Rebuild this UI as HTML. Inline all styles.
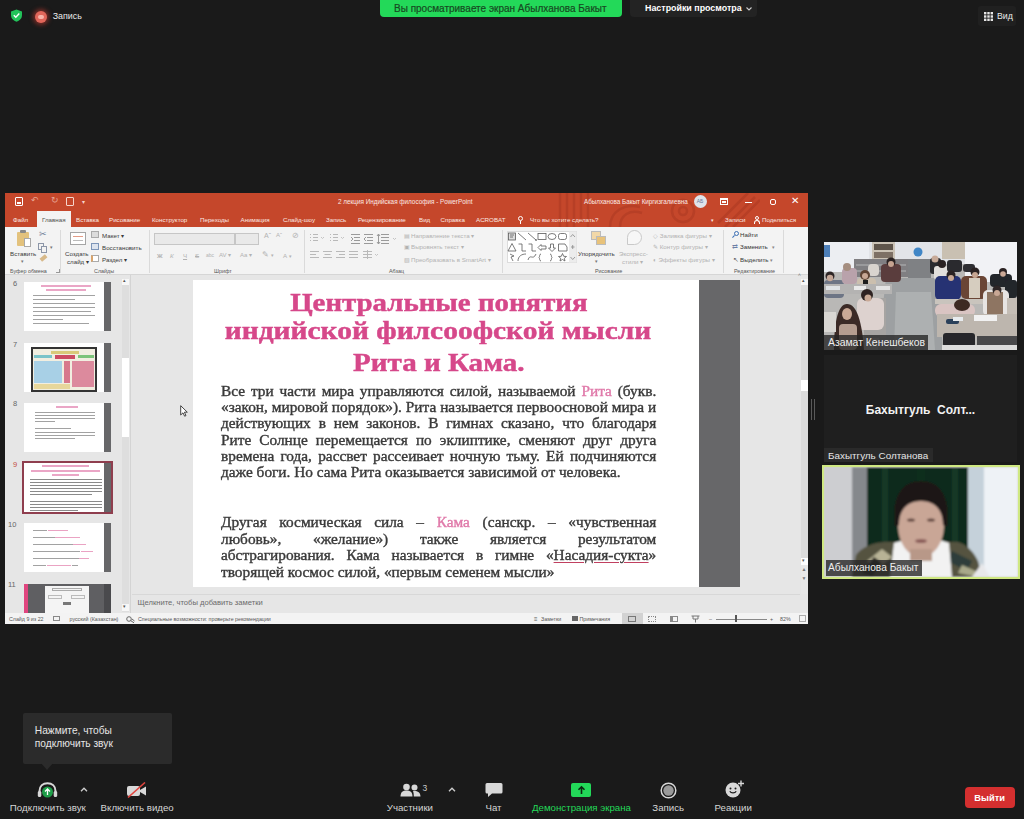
<!DOCTYPE html>
<html><head><meta charset="utf-8">
<style>
*{margin:0;padding:0;box-sizing:border-box}
html,body{width:1024px;height:819px;overflow:hidden;background:#1a1a1a;font-family:"Liberation Sans",sans-serif}
.a{position:absolute;white-space:nowrap}
#ppt{position:absolute;left:5px;top:193px;width:803px;height:431px;background:#e6e6e6;overflow:hidden}
#ttl{position:absolute;left:0;top:0;width:803px;height:34px;background:#c5472b}
#rib{position:absolute;left:0;top:34px;width:803px;height:48px;background:#f3f3f3;border-bottom:1px solid #d6d6d6}
.tab{position:absolute;top:22px;font-size:6.2px;color:#fbe9e4;line-height:10px;white-space:nowrap}
.rl{position:absolute;font-size:6.2px;color:#3a3a3a;line-height:9px;white-space:nowrap}
.gl{position:absolute;top:74px;font-size:5.4px;color:#555;line-height:8px;white-space:nowrap}
.sep{position:absolute;top:37px;width:1px;height:43px;background:#dadada}
.dis{color:#b2b2b2}
#slide{position:absolute;left:188px;top:87px;width:506px;height:307px;background:#fff}
#strip{position:absolute;left:694px;top:87px;width:41px;height:307px;background:#676769}
.tt{position:absolute;font-family:"Liberation Serif",serif;font-weight:bold;color:#d6488a;white-space:nowrap;font-size:25px;line-height:30px;-webkit-text-stroke:0.45px #d6488a}
.bt{position:absolute;font-family:"Liberation Serif",serif;color:#333;white-space:nowrap;font-size:14px;line-height:16px}
#status{position:absolute;left:0;top:420px;width:803px;height:11px;background:#f3f3f3}
.st{position:absolute;top:422px;font-size:5.3px;color:#555;line-height:9px;white-space:nowrap}
.tl{position:absolute;left:9px;height:1px;background:#a2a2a2}
.tp{position:absolute;height:1.2px;background:#eaa3c3}
.tl2{position:absolute;left:6px;width:72px;height:1.1px;background:#8a8a8a}
.thumb{position:absolute;left:19px;width:87px;height:49px;background:#fff}
.thumb .ds{position:absolute;right:0;top:0;width:7px;height:100%;background:#676769}
.tn{position:absolute;left:8px;font-size:7.5px;color:#666;line-height:9px}
.bj,.bl{font-family:"Liberation Serif",serif;color:#3a3a3a;-webkit-text-stroke:0.38px #3a3a3a;font-size:14.2px;line-height:16.2px;height:16.2px;white-space:nowrap;overflow:visible}
.bj{text-align:justify;text-align-last:justify;white-space:normal}
#body2 .bj,#body2 .bl{line-height:16.6px;height:16.6px}
.pk{color:#e07aaa;-webkit-text-stroke-color:#e07aaa}
u{text-decoration:underline;text-decoration-color:#c04060;text-underline-offset:2px}
.bl2{top:802px;font-size:9.7px;color:#d6d6d6;line-height:12px}
.zt{position:absolute;color:#e6e6e6;font-size:10px;white-space:nowrap}
</style></head><body>

<!-- Zoom top bar -->
<div class="a" style="left:380px;top:0;width:242px;height:17px;background:#23d959;border-radius:0 0 4px 4px"></div>
<div class="a" style="left:394px;top:3px;font-size:10px;color:#174a22;line-height:11px;-webkit-text-stroke:0.2px #174a22">Вы просматриваете экран Абылханова Бакыт</div>
<div class="a" style="left:630px;top:0;width:127px;height:17px;background:#232323;border-radius:0 0 4px 4px"></div>
<div class="a" style="left:645px;top:3px;font-size:8.9px;color:#fff;font-weight:bold;line-height:11px">Настройки просмотра</div>

<!-- PowerPoint window -->
<div id="ppt">
  <div id="ttl"></div>
  <svg style="position:absolute;left:545px;top:0" width="210" height="34" viewBox="0 0 210 34" fill="none" stroke="rgba(110,25,10,0.16)" stroke-width="2.5">
    <path d="M10 0 V34 M17 0 V34 M24 0 V34 M31 0 V30 M38 0 V34"/>
    <path d="M60 34 C60 18 75 10 90 14 M70 34 C70 22 80 16 92 20"/>
    <circle cx="133" cy="18" r="11"/><circle cx="133" cy="18" r="4"/>
    <path d="M175 34 L205 4 M183 34 L210 7 M168 30 L198 0"/>
  </svg>
  <!-- quick access -->
  <div style="position:absolute;left:10px;top:4px;width:8px;height:9px;border:1.5px solid #fff;border-radius:1px"></div>
  <div style="position:absolute;left:12px;top:9px;width:4px;height:2px;background:#fff"></div>
  <div class="a" style="left:26px;top:2px;font-size:9px;color:#e8a593">&#x21B6;</div>
  <div class="a" style="left:46px;top:2px;font-size:9px;color:#e8a593">&#x21BB;</div>
  <div style="position:absolute;left:61px;top:4px;width:8px;height:9px;border:1px solid #f6d5cb;border-radius:1px"></div>
  <div class="a" style="left:77px;top:5px;font-size:6px;color:#f6d5cb">&#9662;</div>
  <div class="a" style="left:333px;top:4px;font-size:6.35px;color:#fbe9e4;line-height:9px">2 лекция Индийская философия - PowerPoint</div>
  <div class="a" style="left:579px;top:4px;font-size:6.3px;color:#fbe9e4;line-height:9px">Абылханова Бакыт Киргизгалиевна</div>
  <div style="position:absolute;left:688.5px;top:2px;width:13px;height:13px;border-radius:50%;background:#dfe3ea;font-size:5px;line-height:13px;text-align:center;color:#6a7a9a">АБ</div>
  <div style="position:absolute;left:715px;top:5px;width:8px;height:7px;border:1px solid #fff;border-top-width:2px"></div><div style="position:absolute;left:717px;top:8px;width:4px;height:2px;background:#fff"></div>
  <div style="position:absolute;left:740px;top:9px;width:7px;height:1px;background:#fff"></div>
  <div style="position:absolute;left:765px;top:5.5px;width:6px;height:6px;border:1.2px solid #fff;border-radius:2px"></div>
  <div class="a" style="left:786px;top:2px;font-size:10px;color:#fff;line-height:12px">&#x2715;</div>
  <!-- tabs -->
  <div style="position:absolute;left:32px;top:18px;width:34px;height:17px;background:#f3f3f3"></div>
  <div class="tab" style="left:8px">Файл</div>
  <div class="tab" style="left:37px;color:#505050">Главная</div>
  <div class="tab" style="left:71px">Вставка</div>
  <div class="tab" style="left:104px">Рисование</div>
  <div class="tab" style="left:147px">Конструктор</div>
  <div class="tab" style="left:195px">Переходы</div>
  <div class="tab" style="left:235.6px">Анимация</div>
  <div class="tab" style="left:278px">Слайд-шоу</div>
  <div class="tab" style="left:321px">Запись</div>
  <div class="tab" style="left:353px">Рецензирование</div>
  <div class="tab" style="left:414px">Вид</div>
  <div class="tab" style="left:435.6px">Справка</div>
  <div class="tab" style="left:471px">ACROBAT</div>
  <div style="position:absolute;left:513px;top:23px;width:5px;height:5px;border:1px solid #fff;border-radius:50%"></div>
  <div style="position:absolute;left:515px;top:28px;width:1px;height:3px;background:#fff"></div>
  <div class="tab" style="left:525px">Что вы хотите сделать?</div>
  <div class="tab" style="left:706px;font-size:5px">&#9662;</div>
  <div class="tab" style="left:720px">Записи</div>
  <div style="position:absolute;left:750px;top:23px;width:4px;height:4px;border:1px solid #fff;border-radius:50%"></div>
  <div style="position:absolute;left:749px;top:27px;width:6px;height:4px;border:1px solid #fff;border-bottom:none;border-radius:3px 3px 0 0"></div>
  <div class="tab" style="left:757px">Поделиться</div>
  <div id="rib"></div>
  <!-- Буфер обмена -->
  <div style="position:absolute;left:12px;top:39px;width:12px;height:14px;background:#e3c27d;border-radius:1px"></div>
  <div style="position:absolute;left:15px;top:37px;width:6px;height:3px;background:#8a8a8a;border-radius:1px"></div>
  <div style="position:absolute;left:19px;top:45px;width:7px;height:9px;background:#fff;border:1px solid #a9a9a9"></div>
  <div class="rl" style="left:5px;top:55.5px">Вставить</div>
  <div class="rl" style="left:16px;top:64px;font-size:5px;color:#777">&#9662;</div>
  <div class="rl" style="left:34px;top:36px;font-size:9px;color:#6e7c96;line-height:10px">&#x2702;</div>
  <div style="position:absolute;left:33px;top:50px;width:6px;height:7px;border:1px solid #8c96a8"></div>
  <div style="position:absolute;left:36px;top:53px;width:6px;height:7px;border:1px solid #8c96a8;background:#f3f3f3"></div>
  <div class="rl" style="left:45px;top:50px;font-size:5px;color:#777">&#9662;</div>
  <div style="position:absolute;left:35px;top:63px;width:7px;height:4px;background:#d7b98a;transform:rotate(-40deg)"></div>
  <div class="gl" style="left:5px">Буфер обмена</div>
  <div style="position:absolute;left:51px;top:76px;width:4px;height:4px;border-right:1px solid #999;border-bottom:1px solid #999"></div>
  <div class="sep" style="left:55px"></div>
  <!-- Слайды -->
  <div style="position:absolute;left:65px;top:39px;width:16px;height:13px;background:#fff;border:1px solid #a5a5a5"></div>
  <div style="position:absolute;left:68px;top:43px;width:10px;height:1px;background:#e39b86"></div>
  <div style="position:absolute;left:68px;top:47px;width:10px;height:1px;background:#bbb"></div>
  <div class="rl" style="left:60px;top:55.5px">Создать</div>
  <div class="rl" style="left:62px;top:63.5px">слайд &#9662;</div>
  <div style="position:absolute;left:86px;top:38px;width:8px;height:7px;background:#dcdcdc;border:1px solid #aaa"></div>
  <div class="rl" style="left:97px;top:37.5px">Макет &#9662;</div>
  <div style="position:absolute;left:86px;top:50px;width:8px;height:7px;background:#dde4ee;border:1px solid #7d95b8"></div>
  <div class="rl" style="left:97px;top:49.5px">Восстановить</div>
  <div style="position:absolute;left:86px;top:62px;width:8px;height:7px;background:#fff;border:1px solid #aaa;border-left:2px solid #d9a46b"></div>
  <div class="rl" style="left:97px;top:61.5px">Раздел &#9662;</div>
  <div class="gl" style="left:89px">Слайды</div>
  <div class="sep" style="left:144px"></div>
  <!-- Шрифт -->
  <div style="position:absolute;left:149px;top:40px;width:81px;height:12px;background:#e9e9e9;border:1px solid #c6c6c6"></div>
  <div style="position:absolute;left:230px;top:40px;width:24px;height:12px;background:#e9e9e9;border:1px solid #c6c6c6"></div>
  <div class="rl dis" style="left:259px;top:38px;font-size:7px">A&#710;</div>
  <div class="rl dis" style="left:271px;top:38px;font-size:6px">A&#711;</div>
  <div class="rl dis" style="left:287px;top:38px;font-size:8px">&#x2298;</div>
  <div class="rl dis" style="left:152px;top:57.5px;font-weight:bold">Ж</div>
  <div class="rl dis" style="left:165px;top:57.5px;font-style:italic">К</div>
  <div class="rl dis" style="left:178px;top:57.5px;text-decoration:underline">Ч</div>
  <div class="rl dis" style="left:190px;top:57.5px;text-decoration:line-through">S</div>
  <div class="rl dis" style="left:201px;top:57.5px;font-size:5px">abc</div>
  <div class="rl dis" style="left:214px;top:57.5px;font-size:6px">AV &#9662;</div>
  <div class="rl dis" style="left:235px;top:57.5px;font-size:6px">Aa &#9662;</div>
  <div class="rl dis" style="left:257px;top:56.5px;font-size:8px">&#x270E; <span style="font-size:5px">&#9662;</span></div>
  <div class="rl dis" style="left:278px;top:57.5px">A <span style="font-size:5px">&#9662;</span></div>
  <div class="gl" style="left:209px">Шрифт</div>
  <div class="sep" style="left:299px"></div>
  <!-- Абзац -->
  <svg style="position:absolute;left:302px;top:40px" width="95" height="28" viewBox="0 0 95 28" fill="none" stroke="#b9b9b9" stroke-width="1">
    <path d="M3 1.5 H4 M6 1.5 H11 M3 4.5 H4 M6 4.5 H11 M3 7.5 H4 M6 7.5 H11"/><path d="M14 4 L15.5 5.5 L17 4" stroke="#c4c4c4"/>
    <path d="M23 1.5 H24 M26 1.5 H31 M23 4.5 H24 M26 4.5 H31 M23 7.5 H24 M26 7.5 H31"/><path d="M34 4 L35.5 5.5 L37 4" stroke="#c4c4c4"/>
    <path d="M44 1.5 H53 M47 4.5 H53 M47 7.5 H53 M44 10.5 H53" stroke="#9a9a9a"/><path d="M44 4 L46 6 L44 8" stroke="#9a9a9a"/>
    <path d="M57 1.5 H66 M60 4.5 H66 M60 7.5 H66 M57 10.5 H66" stroke="#9a9a9a"/><path d="M59 4 L57 6 L59 8" stroke="#9a9a9a"/>
    <path d="M74 1.5 H82 M74 4.5 H82 M74 7.5 H82 M74 10.5 H82" stroke="#9a9a9a"/><path d="M71.5 1 V11 M70 3 L71.5 1 L73 3 M70 9 L71.5 11 L73 9" stroke="#9a9a9a"/><path d="M86 5 L87.5 6.5 L89 5" stroke="#c4c4c4"/>
    <path d="M3 18.5 H12 M3 21.5 H9 M3 24.5 H12"/>
    <path d="M16 18.5 H25 M17.5 21.5 H23.5 M16 24.5 H25"/>
    <path d="M29 18.5 H38 M32 21.5 H38 M29 24.5 H38"/>
    <path d="M42 18.5 H51 M42 21.5 H51 M42 24.5 H51"/>
    <path d="M56 18.5 H65 M56 21.5 H65 M56 24.5 H65 M60.5 17 V26"/><path d="M68 21 L69.5 22.5 L71 21" stroke="#c4c4c4"/>
  </svg>
  <div class="rl dis" style="left:399px;top:37.5px">&#x25A4;</div>
  <div class="rl dis" style="left:406px;top:37.5px">Направление текста &#9662;</div>
  <div class="rl dis" style="left:399px;top:49px">&#x25A3;</div>
  <div class="rl dis" style="left:406px;top:49px">Выровнять текст &#9662;</div>
  <div class="rl dis" style="left:399px;top:61.5px">&#x25A7;</div>
  <div class="rl dis" style="left:406px;top:61.5px">Преобразовать в SmartArt &#9662;</div>
  <div class="gl" style="left:384px">Абзац</div>
  <div class="sep" style="left:497px"></div>
  <!-- Рисование -->
  <div style="position:absolute;left:502px;top:37.5px;width:70px;height:32px;background:#fff;border:1px solid #dcdcdc"></div>
  <svg style="position:absolute;left:502px;top:37.5px" width="70" height="32" viewBox="0 0 70 32" fill="none" stroke="#5a5a5a" stroke-width="0.8">
    <rect x="1.5" y="2" width="7" height="7" fill="#ddd"/><path d="M3 4 H7 M3 6 H6"/>
    <path d="M11 2 L19 9"/><path d="M21 2 L29 9"/><path d="M28 9 L29.5 9.5 L29 8" />
    <rect x="31" y="2.5" width="8" height="6"/>
    <ellipse cx="45" cy="5.5" rx="4" ry="3"/>
    <rect x="51.5" y="2.5" width="8" height="6" rx="2"/>
    <path d="M5 12.5 L9 20 H1 Z"/>
    <path d="M11.5 13 H15 V20 H19"/>
    <path d="M21.5 13 H25 V20 H29"/>
    <path d="M31 16.5 L34 13.5 V15 H39 V18 H34 V19.5 Z"/>
    <path d="M43.5 13 H46.5 V17 H48.5 L45 20.5 L41.5 17 H43.5 Z"/>
    <path d="M51.5 13 H58 L60 16 V20 H51.5 Z"/>
    <path d="M3 23 L7 25 L4 26 L6 30"/>
    <path d="M11 30 C11 25 15 23 19 23"/>
    <path d="M21 29 C23 22 26 30 29 23"/>
    <path d="M34 23 C32 23 33 26 32 26.5 C33 27 32 30 34 30"/>
    <path d="M43 23 C45 23 44 26 45 26.5 C44 27 45 30 43 30"/>
    <path d="M55.5 22.5 L56.7 25.3 L59.5 25.5 L57.3 27.3 L58 30 L55.5 28.5 L53 30 L53.7 27.3 L51.5 25.5 L54.3 25.3 Z"/>
    <rect x="62" y="0.5" width="7.5" height="31" fill="#ececec" stroke="none"/>
    <path d="M63.5 6 L65.7 3.5 L68 6" stroke="#888"/><path d="M64 16 H67.5 M65.7 14 V18" stroke="#888"/><path d="M63.5 26 L65.7 28.5 L68 26" stroke="#888"/>
  </svg>
  <div style="position:absolute;left:586px;top:38px;width:10px;height:9px;background:#f2d8a8;border:1px solid #bbb"></div>
  <div style="position:absolute;left:591px;top:43px;width:10px;height:9px;background:#e8c27a;border:1px solid #bbb"></div>
  <div class="rl" style="left:573px;top:55.5px">Упорядочить</div>
  <div class="rl" style="left:590px;top:63.5px;font-size:5px;color:#777">&#9662;</div>
  <div style="position:absolute;left:622px;top:37px;width:15px;height:15px;border:1px solid #c9c9c9;border-radius:50% 50% 50% 0;background:#f7f7f7"></div>
  <div class="rl dis" style="left:614px;top:55.5px">Экспресс-</div>
  <div class="rl dis" style="left:617px;top:63.5px">стили &#9662;</div>
  <div class="rl dis" style="left:648px;top:37.5px">&#x25C7; Заливка фигуры &#9662;</div>
  <div class="rl dis" style="left:648px;top:49px">&#x270E; Контур фигуры &#9662;</div>
  <div class="rl dis" style="left:648px;top:61.5px">&#x25D0; Эффекты фигуры &#9662;</div>
  <div class="gl" style="left:590px">Рисование</div>
  <div class="sep" style="left:718px"></div>
  <!-- Редактирование -->
  <div style="position:absolute;left:729px;top:38px;width:5px;height:5px;border:1px solid #3b6fb5;border-radius:50%"></div>
  <div style="position:absolute;left:727px;top:43px;width:3px;height:1px;background:#3b6fb5;transform:rotate(-45deg)"></div>
  <div class="rl" style="left:735px;top:37px;color:#333">Найти</div>
  <div class="rl" style="left:727px;top:49px;font-size:7px;color:#6c7fa6">&#x21C4;</div>
  <div class="rl" style="left:735px;top:49px;color:#333">Заменить <span style="font-size:5px;color:#888">&nbsp;&nbsp;&#9662;</span></div>
  <div class="rl" style="left:728px;top:61.5px;font-size:7px;color:#666">&#x2196;</div>
  <div class="rl" style="left:735px;top:61.5px;color:#333">Выделить <span style="font-size:5px;color:#888">&#9662;</span></div>
  <div class="gl" style="left:729px">Редактирование</div>
  <div class="sep" style="left:778px"></div>
  <div class="rl" style="left:793px;top:74px;font-size:7px;color:#666">&#x2038;</div>
  <div id="slide"></div>
  <div id="strip"></div>
  <div class="tt" style="left:0;width:867px;top:95px;text-align:center"><span style="display:inline-block;transform:scaleX(1.154)">Центральные понятия</span></div>
  <div class="tt" style="left:0;width:867px;top:123px;text-align:center"><span style="display:inline-block;transform:scaleX(1.178)">индийской филсоофской мысли</span></div>
  <div class="tt" style="left:0;width:867px;top:155px;text-align:center"><span style="display:inline-block;transform:scaleX(1.162)">Рита и Кама.</span></div>
  <div id="body1" style="position:absolute;left:216px;top:190px;width:403px;transform:scaleX(1.08);transform-origin:0 0">
    <div class="bj">Все три части мира управляются силой, называемой <span class="pk">Рита</span> (букв.</div>
    <div class="bj">«закон, мировой порядок»). Рита называется первоосновой мира и</div>
    <div class="bj">действующих в нем законов. В гимнах сказано, что благодаря</div>
    <div class="bj">Рите Солнце перемещается по эклиптике, сменяют друг друга</div>
    <div class="bj">времена года, рассвет рассеивает ночную тьму. Ей подчиняются</div>
    <div class="bl">даже боги. Но сама Рита оказывается зависимой от человека.</div>
  </div>
  <div id="body2" style="position:absolute;left:216px;top:321px;width:403px;transform:scaleX(1.08);transform-origin:0 0">
    <div class="bj">Другая космическая сила – <span class="pk">Кама</span> (санскр. – «чувственная</div>
    <div class="bj">любовь», «желание») также является результатом</div>
    <div class="bj">абстрагирования. Кама называется в гимне «<u>Насадия-сукта</u>»</div>
    <div class="bl">творящей космос силой, «первым семенем мысли»</div>
  </div>
  <!-- left pane -->
  <div style="position:absolute;left:125px;top:82px;width:1px;height:338px;background:#d4d4d4"></div>
  <div style="position:absolute;left:117px;top:86px;width:7px;height:333px;background:#dedede"></div>
  <div style="position:absolute;left:117px;top:86px;width:7px;height:6px;background:#f7f7f7"></div>
  <div class="a" style="left:118px;top:84px;font-size:5px;color:#555">&#9652;</div>
  <div style="position:absolute;left:117px;top:165px;width:7px;height:79px;background:#fff"></div>
  <div style="position:absolute;left:117px;top:411px;width:7px;height:7px;background:#f7f7f7"></div>
  <div class="a" style="left:118px;top:410px;font-size:5px;color:#555">&#9662;</div>
  <div class="tn" style="top:86px">6</div>
  <div class="tn" style="top:146.6px">7</div>
  <div class="tn" style="top:206px">8</div>
  <div class="tn" style="top:267px;color:#c44a3c">9</div>
  <div class="tn" style="top:327px;left:3px">10</div>
  <div class="tn" style="top:387px;left:3px">11</div>
  <!-- thumb 6 -->
  <div class="thumb" style="top:89.4px">
    <div style="position:absolute;left:17px;top:3px;width:50px;height:1.8px;background:#eaa6c6"></div>
    <div style="position:absolute;left:22px;top:7px;width:40px;height:1.8px;background:#eaa6c6"></div>
    <div class="tl" style="top:13px;width:62px"></div><div class="tl" style="top:17px;width:42px"></div>
    <div class="tl" style="top:21px;width:62px"></div><div class="tl" style="top:25px;width:62px"></div>
    <div class="tl" style="top:29px;width:58px"></div><div class="tl" style="top:33px;width:62px"></div>
    <div class="tl" style="top:37px;width:30px"></div><div class="tl" style="top:41px;width:56px"></div>
    <div class="ds"></div></div>
  <!-- thumb 7 -->
  <div class="thumb" style="top:149.7px">
    <div style="position:absolute;left:7px;top:4px;width:66px;height:45px;border:2px solid #333;background:#f1eee0"></div>
    <div style="position:absolute;left:27px;top:8px;width:28px;height:3px;background:#d9c97a"></div>
    <div style="position:absolute;left:10px;top:12px;width:18px;height:3px;background:#7bc4c9"></div>
    <div style="position:absolute;left:31px;top:12px;width:20px;height:4px;background:#cc4b63"></div>
    <div style="position:absolute;left:54px;top:12px;width:16px;height:3px;background:#7cc47a"></div>
    <div style="position:absolute;left:10px;top:18px;width:28px;height:22px;background:#a8d0e6"></div>
    <div style="position:absolute;left:40px;top:18px;width:6px;height:22px;background:#d7788c"></div>
    <div style="position:absolute;left:48px;top:18px;width:22px;height:26px;background:#dc8a9d"></div>
    <div style="position:absolute;left:10px;top:41px;width:36px;height:5px;background:#e7d79b"></div>
    <div class="ds"></div></div>
  <!-- thumb 8 -->
  <div class="thumb" style="top:209.6px">
    <div style="position:absolute;left:32px;top:3px;width:22px;height:2.2px;background:#eaa6c6"></div>
    <div class="tl" style="left:11px;top:9px;width:60px"></div><div class="tl" style="left:11px;top:12px;width:60px"></div>
    <div class="tl" style="left:11px;top:15px;width:60px"></div><div class="tl" style="left:11px;top:18px;width:20px"></div>
    <div class="tl" style="left:11px;top:25px;width:36px"></div>
    <div class="tl" style="left:11px;top:29px;width:60px"></div><div class="tl" style="left:11px;top:32px;width:60px"></div>
    <div class="tl" style="left:11px;top:35px;width:40px"></div>
    <div class="ds"></div></div>
  <!-- thumb 9 -->
  <div style="position:absolute;left:17px;top:268.3px;width:91px;height:53px;border:2px solid #8f3e4e"></div>
  <div class="thumb" style="top:270px">
    <div style="position:absolute;left:18px;top:2px;width:47px;height:2.2px;background:#eaa6c6"></div>
    <div style="position:absolute;left:7px;top:7px;width:69px;height:2.2px;background:#eaa6c6"></div>
    <div style="position:absolute;left:28px;top:11px;width:27px;height:2.2px;background:#eaa6c6"></div>
    <div class="tl2" style="top:16px"></div><div class="tl2" style="top:19px"></div><div class="tl2" style="top:22px"></div>
    <div class="tl2" style="top:25px"></div><div class="tl2" style="top:28px"></div><div class="tl2" style="top:31px;width:62px"></div>
    <div class="tl2" style="top:38px"></div><div class="tl2" style="top:41px"></div><div class="tl2" style="top:44px"></div><div class="tl2" style="top:47px;width:48px"></div>
    <div class="ds"></div></div>
  <!-- thumb 10 -->
  <div class="thumb" style="top:330px">
    <div class="tl" style="left:9px;top:7px;width:14px"></div><div class="tp" style="left:24px;top:7px;width:20px"></div>
    <div class="tl" style="left:9px;top:14px;width:22px"></div><div class="tp" style="left:31px;top:14px;width:25px"></div>
    <div class="tl" style="left:9px;top:21px;width:40px"></div><div class="tp" style="left:49px;top:21px;width:13px"></div>
    <div class="tl" style="left:9px;top:28px;width:47px"></div><div class="tp" style="left:57px;top:28px;width:12px"></div>
    <div class="tl" style="left:9px;top:35px;width:46px"></div><div class="tp" style="left:55px;top:35px;width:10px"></div>
    <div class="tl" style="left:9px;top:42px;width:13px"></div><div class="tp" style="left:23px;top:42px;width:24px"></div><div class="tl" style="left:48px;top:42px;width:6px"></div>
    <div class="ds"></div></div>
  <!-- thumb 11 -->
  <div class="thumb" style="top:390.8px;background:#5f5f62;height:30px">
    <div style="position:absolute;left:0;top:0;width:4px;height:30px;background:#e0457f"></div>
    <div style="position:absolute;left:21px;top:2px;width:44px;height:28px;background:#f4f4f4"></div>
    <div style="position:absolute;left:28px;top:4px;width:30px;height:3px;border:1px solid #aaa"></div>
    <div style="position:absolute;left:24px;top:11px;width:14px;height:4px;border:1px solid #bbb"></div>
    <div style="position:absolute;left:47px;top:11px;width:14px;height:4px;border:1px solid #bbb"></div>
    <div style="position:absolute;left:39px;top:18px;width:8px;height:3px;background:#777"></div>
    <div class="ds" style="background:#4a4a4d"></div></div>
  <!-- main scrollbar -->
  <div style="position:absolute;left:795.5px;top:86px;width:7px;height:315px;background:#dcdcdc"></div>
  <div style="position:absolute;left:795.5px;top:86px;width:7px;height:6px;background:#f7f7f7"></div>
  <div class="a" style="left:796.5px;top:84px;font-size:5px;color:#555">&#9652;</div>
  <div style="position:absolute;left:795.5px;top:186.5px;width:7px;height:11px;background:#fff"></div>
  <div style="position:absolute;left:795.5px;top:365px;width:7px;height:36px;background:#e8e8e8"></div>
  <div style="position:absolute;left:795.5px;top:365px;width:7px;height:7px;background:#fff"></div>
  <div class="a" style="left:796.5px;top:363.5px;font-size:5px;color:#555">&#9662;</div>
  <div class="a" style="left:796.5px;top:373px;font-size:5px;color:#777">&#9650;</div>
  <div class="a" style="left:796.5px;top:382px;font-size:5px;color:#777">&#9660;</div>
  <!-- notes -->
  <div style="position:absolute;left:127px;top:401px;width:668px;height:1px;background:#d8d8d8"></div>
  <div class="a" style="left:132.4px;top:405px;font-size:7.6px;color:#6a6a6a;line-height:10px">Щелкните, чтобы добавить заметки</div>
  <div id="status"></div>
  <div class="st" style="left:4px">Слайд 9 из 22</div>
  <div style="position:absolute;left:48px;top:423px;width:7px;height:5px;border:1px solid #888"></div>
  <div class="st" style="left:64.5px">русский (Казахстан)</div>
  <svg class="a" style="left:121px;top:423px" width="9" height="7" viewBox="0 0 9 7"><circle cx="3" cy="3" r="2.3" stroke="#666" stroke-width="1" fill="none"/><path d="M4.5 4.5 L8 6.8 M6 3 L8.5 5" stroke="#666" stroke-width="1"/></svg>
  <div class="st" style="left:133px">Специальные возможности: проверьте рекомендации</div>
  <div class="st" style="left:529px;font-size:6px">&#x2261;</div>
  <div class="st" style="left:536px">Заметки</div>
  <div style="position:absolute;left:567px;top:423px;width:6px;height:5px;background:#666"></div>
  <div class="st" style="left:574.5px">Примечания</div>
  <div style="position:absolute;left:617px;top:420px;width:20.5px;height:11px;background:#d2d2d2"></div>
  <div style="position:absolute;left:623px;top:422.5px;width:8px;height:6px;border:1px solid #777"></div>
  <div style="position:absolute;left:643px;top:422.5px;width:8px;height:6px;border:1px dotted #888"></div>
  <div style="position:absolute;left:665px;top:422.5px;width:8px;height:6px;border:1px solid #888;border-left-width:3px"></div>
  <svg class="a" style="left:686px;top:422px" width="9" height="8" viewBox="0 0 9 8"><path d="M0.5 1 H8.5 M2 1 V4 H7 V1 M4.5 4 V7.5" stroke="#777" stroke-width="1" fill="none"/></svg>
  <div class="st" style="left:704px">&#x2013;</div>
  <div style="position:absolute;left:710.5px;top:425.5px;width:51px;height:1px;background:#888"></div>
  <div style="position:absolute;left:730px;top:422px;width:2px;height:7px;background:#555"></div>
  <div class="st" style="left:765px">+</div>
  <div class="st" style="left:775px">82%</div>
  <div style="position:absolute;left:794px;top:422px;width:7px;height:7px;border:1px solid #aaa"></div>
</div>


<!-- top-left -->
<svg class="a" style="left:10px;top:9px" width="13" height="13" viewBox="0 0 13 13"><path d="M6.5 0.5 L12 2.5 V6 C12 9.5 9.5 11.7 6.5 12.7 C3.5 11.7 1 9.5 1 6 V2.5 Z" fill="#22c35a"/><path d="M3.8 6.3 L5.8 8.3 L9.3 4.6" stroke="#fff" stroke-width="1.4" fill="none"/></svg>
<div class="a" style="left:35px;top:11px;width:12px;height:12px;border-radius:50%;background:#e0665a;box-shadow:0 0 4px 2px rgba(200,60,50,.55)"></div>
<div class="a" style="left:38px;top:15px;width:6px;height:4px;border-radius:2px;background:#f7b3a8"></div>
<div class="a" style="left:52.7px;top:11px;font-size:8.9px;color:#e8e8e8;line-height:11px">Запись</div>
<div class="a" style="left:978px;top:6px;width:38px;height:20px;background:#202020;border-radius:3px"></div>
<svg class="a" style="left:984px;top:12px" width="9" height="9" viewBox="0 0 9 9" fill="#e6e6e6"><rect x="0" y="0" width="2.4" height="2.4"/><rect x="3.3" y="0" width="2.4" height="2.4"/><rect x="6.6" y="0" width="2.4" height="2.4"/><rect x="0" y="3.3" width="2.4" height="2.4"/><rect x="3.3" y="3.3" width="2.4" height="2.4"/><rect x="6.6" y="3.3" width="2.4" height="2.4"/><rect x="0" y="6.6" width="2.4" height="2.4"/><rect x="3.3" y="6.6" width="2.4" height="2.4"/><rect x="6.6" y="6.6" width="2.4" height="2.4"/></svg>
<div class="a" style="left:997px;top:10.5px;font-size:8.8px;color:#e8e8e8;line-height:11px">Вид</div>
<svg class="a" style="left:746px;top:7px" width="6" height="4" viewBox="0 0 6 4"><path d="M0.5 0.5 L3 3 L5.5 0.5" stroke="#ccc" stroke-width="1.1" fill="none"/></svg>

<!-- video tile 1: classroom -->
<div class="a" style="left:824px;top:242px;width:193px;height:108px;overflow:hidden"><svg style="position:absolute;left:0;top:0" width="193" height="108" viewBox="0 0 193 108"><defs><filter id="bl1" x="-5%" y="-5%" width="110%" height="110%"><feGaussianBlur stdDeviation="0.7"/></filter></defs><g filter="url(#bl1)">
  <rect width="193" height="108" fill="#b9b8b6"/>
  <rect x="0" y="0" width="193" height="22" fill="#e2e4e8"/>
  <rect x="0" y="0" width="45" height="30" fill="#eceef2"/>
  <rect x="0" y="3" width="6" height="12" fill="#4d7fb8"/>
  <rect x="48" y="0" width="23" height="17" fill="#cbc3b6"/>
  <rect x="50" y="2" width="19" height="6" fill="#5f554c"/><rect x="50" y="10" width="19" height="6" fill="#7d7065"/>
  <circle cx="94" cy="10" r="4.5" fill="#3f86c6"/>
  <rect x="118" y="0" width="23" height="17" fill="#c9c0b2"/>
  <rect x="141" y="0" width="52" height="40" fill="#f1f2f5"/>
  <rect x="30" y="17" width="56" height="18" fill="#807f82"/>
  <rect x="32" y="22" width="50" height="2" fill="#9a9a9c"/><rect x="32" y="28" width="50" height="2" fill="#9a9a9c"/>
  <rect x="84" y="17" width="23" height="19" fill="#7f8184"/>
  <polygon points="62,36 113,36 119,108 54,108" fill="#9da0a2"/>
  <polygon points="72,50 107,50 111,108 70,108" fill="#adb0b1"/>
  <!-- left: people -->
  <rect x="0" y="38" width="20" height="18" rx="4" fill="#6d7585"/>
  <circle cx="6" cy="34" r="4.5" fill="#2e2626"/><circle cx="6" cy="36" r="3.2" fill="#c6a898"/>
  <rect x="18" y="26" width="15" height="16" rx="4" fill="#b9a2ab"/>
  <circle cx="23" cy="25" r="4" fill="#a58e80"/>
  <rect x="44" y="22" width="11" height="12" rx="4" fill="#d9d4cf"/>
  <rect x="33" y="36" width="19" height="16" rx="4" fill="#cbbfae"/>
  <circle cx="41" cy="33" r="5" fill="#5c4232"/><circle cx="41" cy="34" r="3" fill="#c8a894"/>
  <rect x="39" y="38" width="5" height="6" fill="#1e1e1e"/>
  <rect x="57" y="22" width="20" height="18" rx="4" fill="#5a3c3c"/>
  <circle cx="67" cy="20" r="4.5" fill="#2a2222"/><circle cx="67" cy="22" r="3" fill="#c5a390"/>
  <rect x="0" y="42" width="68" height="10" fill="#b4b3b2"/>
  <rect x="2" y="44" width="14" height="4" fill="#dfe3e6"/><rect x="30" y="44" width="12" height="4" fill="#e9e9e9"/><rect x="52" y="44" width="14" height="4" fill="#e3e3e3"/>
  <rect x="40" y="56" width="22" height="40" fill="#a6a4a2"/>
  <rect x="33" y="56" width="27" height="32" rx="6" fill="#ddd2cf"/>
  <circle cx="43" cy="53" r="6" fill="#2e2420"/><circle cx="44" cy="56" r="3.5" fill="#c9a996"/>
  <path d="M10 108 C10 80 14 62 23 62 C33 62 38 80 40 108 Z" fill="#3a2b26"/>
  <ellipse cx="23" cy="72" rx="5" ry="6" fill="#c9a996"/>
  <rect x="15" y="82" width="18" height="26" rx="4" fill="#b59d90"/>
  <rect x="0" y="70" width="12" height="20" fill="#d9d7d3"/>
  <!-- right: people -->
  <rect x="106" y="16" width="11" height="16" rx="3" fill="#2a2a2e"/><circle cx="111" cy="17" r="3.5" fill="#c7aa98"/>
  <rect x="110" y="24" width="14" height="14" rx="3" fill="#e2dfdc"/><circle cx="118" cy="22" r="4" fill="#2a2222"/>
  <rect x="123" y="18" width="15" height="12" rx="3" fill="#2a2a2e"/>
  <rect x="139" y="22" width="12" height="8" rx="3" fill="#2f2f33"/>
  <rect x="111" y="34" width="26" height="24" rx="5" fill="#253273"/>
  <circle cx="127" cy="33" r="4.5" fill="#2a2020"/><circle cx="127" cy="36" r="3" fill="#c9a894"/>
  <rect x="137" y="34" width="26" height="23" rx="5" fill="#6a4535"/>
  <rect x="145" y="36" width="11" height="20" fill="#d6cdbf"/>
  <circle cx="151" cy="30" r="4.5" fill="#2a2020"/><circle cx="151" cy="33" r="3" fill="#c7a692"/>
  <rect x="166" y="32" width="22" height="13" rx="4" fill="#22252a"/>
  <circle cx="179" cy="30" r="4" fill="#2a2222"/><circle cx="179" cy="32" r="2.8" fill="#caa996"/>
  <rect x="181" y="38" width="12" height="18" rx="3" fill="#23252b"/>
  <rect x="111" y="57" width="82" height="5" fill="#c9c4bd"/>
  <rect x="111" y="62" width="40" height="13" rx="6" fill="#d9c4c2"/>
  <ellipse cx="138" cy="63" rx="8" ry="6" fill="#3d2a24"/>
  <rect x="159" y="48" width="26" height="26" rx="5" fill="#e7e4e2"/>
  <rect x="163" y="50" width="16" height="22" fill="#8e7562"/>
  <circle cx="173" cy="48" r="4.5" fill="#2e2626"/><circle cx="173" cy="51" r="3" fill="#c8a794"/>
  <rect x="183" y="56" width="10" height="16" fill="#c4bdb5"/>
  <rect x="113" y="72" width="80" height="23" fill="#bdb6ae"/>
  <rect x="150" y="73" width="23" height="6" fill="#f1f1f1"/>
  <rect x="122" y="77" width="13" height="5" rx="2" fill="#2b3f5a"/><rect x="129" y="75" width="10" height="4" fill="#e8ecef"/>
  <rect x="119" y="91" width="32" height="14" rx="3" fill="#26282c"/>
  <rect x="153" y="94" width="40" height="10" fill="#4a4a4c"/>
  <rect x="118" y="103" width="75" height="5" fill="#dcdcdc"/>
</g></svg></div>
<div class="a" style="left:824px;top:335px;width:104px;height:15px;background:rgba(36,36,36,.78)"></div>
<div class="a" style="left:828px;top:337px;font-size:10.4px;color:#eee;line-height:12px">Азамат Кенешбеков</div>

<div class="a" style="left:811px;top:399px;width:1.2px;height:21px;background:#5a5a5a"></div>
<div class="a" style="left:813.6px;top:399px;width:1.2px;height:21px;background:#5a5a5a"></div>
<!-- tile 2 -->
<div class="a" style="left:824px;top:355px;width:193px;height:107px;background:#1f1f1f"></div>
<div class="a" style="left:824px;top:402.5px;width:193px;text-align:center;font-size:12px;font-weight:bold;color:#f2f2f2;line-height:15px;padding-left:0">Бахытгуль&nbsp; Солт...</div>
<div class="a" style="left:824px;top:448px;width:109px;height:14px;background:#2a2a2a"></div>
<div class="a" style="left:828px;top:450px;font-size:9.9px;color:#e6e6e6;line-height:12px">Бахытгуль Солтанова</div>

<!-- tile 3: speaker -->
<svg class="a" style="left:821.5px;top:465px" width="198" height="114" viewBox="0 0 198 114"><defs><filter id="bl2" x="-5%" y="-5%" width="110%" height="110%"><feGaussianBlur stdDeviation="0.8"/></filter></defs><g filter="url(#bl2)">
  <rect width="198" height="114" fill="#d0d1d4"/>
  <rect x="2" y="2" width="34" height="110" fill="#cdced1"/>
  <rect x="30" y="2" width="15" height="110" fill="#85888c"/>
  <rect x="45" y="2" width="103" height="110" fill="#112b1b"/>
  <rect x="60" y="2" width="6" height="110" fill="#1b3f2a" opacity=".7"/>
  <rect x="95" y="2" width="8" height="110" fill="#12301f" opacity=".8"/>
  <rect x="130" y="2" width="6" height="110" fill="#1b3f2a" opacity=".7"/>
  <rect x="146" y="2" width="18" height="110" fill="#c5d1da"/>
  <rect x="162" y="2" width="34" height="110" fill="#eef2f6"/>
  <!-- vest -->
  <path d="M30 112 L34 90 C40 82 50 78 62 77 L136 77 C146 80 152 88 156 96 L160 112 Z" fill="#54523f"/>
  <path d="M45 96 L60 84 L70 92 L55 104 Z" fill="#b8b396"/>
  <path d="M130 86 L150 96 L145 106 L125 96 Z" fill="#2f3e3a"/>
  <path d="M40 108 L52 92 L60 98 L50 112 Z" fill="#1c1c18"/>
  <path d="M140 100 L158 108 L155 112 L136 108 Z" fill="#a8a88a"/>
  <!-- collar -->
  <path d="M68 112 L72 78 L85 74 L100 94 L115 74 L127 78 L130 112 Z" fill="#f2f2f2"/>
  <path d="M150 112 L160 98 L168 112 Z" fill="#e8e8ea"/>
  <!-- hair and face -->
    <ellipse cx="99" cy="61" rx="23" ry="31" fill="#c9a696"/><path d="M73 62 C69 32 80 16 99 16 C118 16 129 32 125 62 L121 60 C121 44 112 36 99 36 C86 36 77 44 77 60 Z" fill="#1c1818"/>
  <ellipse cx="89" cy="55" rx="4" ry="1.5" fill="#5a3e38"/>
  <ellipse cx="109" cy="55" rx="4" ry="1.5" fill="#5a3e38"/>
  <ellipse cx="99" cy="76" rx="6" ry="2" fill="#8a5c58"/>
  <rect x="88" y="84" width="22" height="12" fill="#b89888"/>
  </g><rect x="1" y="1" width="196" height="112" fill="none" stroke="#cfe882" stroke-width="2.2"/>
</svg>
<div class="a" style="left:826px;top:560px;width:95.6px;height:15.5px;background:rgba(40,40,40,.8)"></div>
<div class="a" style="left:828px;top:562px;font-size:10.2px;color:#eee;line-height:12px">Абылханова Бакыт</div>

<svg class="a" style="left:180px;top:405px" width="8" height="12" viewBox="0 0 8 12"><path d="M0.7 0.7 V10 L3 7.8 L4.6 11.2 L6 10.6 L4.4 7.2 L7.3 7.2 Z" fill="#fff" stroke="#333" stroke-width="0.9"/></svg>
<!-- tooltip -->
<div class="a" style="left:22.5px;top:712.5px;width:149px;height:51.5px;background:#2b2b2b;border-radius:2px"></div>
<div class="a" style="left:41px;top:763px;width:0;height:0;border-left:6px solid transparent;border-right:6px solid transparent;border-top:7px solid #2b2b2b"></div>
<div class="a" style="left:34.8px;top:724px;font-size:10.2px;color:#e6e6e6;line-height:13px">Нажмите, чтобы<br>подключить звук</div>

<!-- bottom toolbar -->
<svg class="a" style="left:37px;top:782px" width="21" height="16" viewBox="0 0 21 16"><path d="M2.5 12 V9 C2.5 4 6 1.2 10.5 1.2 C15 1.2 18.5 4 18.5 9 V12" stroke="#d8d8d8" stroke-width="2" fill="none"/><rect x="0.8" y="9" width="3.5" height="6" rx="1.5" fill="#d8d8d8"/><rect x="16.7" y="9" width="3.5" height="6" rx="1.5" fill="#d8d8d8"/><circle cx="10.5" cy="10" r="5.5" fill="#1e9e48"/><path d="M10.5 13 V7.2 M8 9.5 L10.5 7 L13 9.5" stroke="#fff" stroke-width="1.3" fill="none"/></svg>
<svg class="a" style="left:80px;top:787px" width="8" height="5" viewBox="0 0 8 5"><path d="M1 4.2 L4 1.2 L7 4.2" stroke="#cfcfcf" stroke-width="1.3" fill="none"/></svg>
<div class="a bl2" style="left:8.2px;width:79.3px;text-align:center">Подключить звук</div>
<svg class="a" style="left:126px;top:782px" width="22" height="16" viewBox="0 0 22 16"><rect x="1" y="4" width="13" height="10" rx="2" fill="#d8d8d8"/><path d="M14 8 L20 4.5 V13.5 L14 10 Z" fill="#d8d8d8"/><path d="M2 15.5 L19 0.5" stroke="#e0443e" stroke-width="1.6"/></svg>
<div class="a bl2" style="left:100.6px;width:72.8px;text-align:center">Включить видео</div>

<svg class="a" style="left:400px;top:783px" width="21" height="14" viewBox="0 0 21 14" fill="#d8d8d8"><circle cx="6.5" cy="4" r="3.3"/><path d="M0.5 13.5 C0.5 9 3 7.5 6.5 7.5 C10 7.5 12.5 9 12.5 13.5 Z"/><circle cx="14.5" cy="4.5" r="3"/><path d="M13 8 C17 7.5 20.5 9 20.5 13.5 H13.8 C13.8 11 13.5 9.2 13 8 Z"/></svg>
<div class="a" style="left:422.5px;top:783px;font-size:8.5px;color:#ccc;line-height:10px">3</div>
<svg class="a" style="left:448px;top:787px" width="8" height="5" viewBox="0 0 8 5"><path d="M1 4.2 L4 1.2 L7 4.2" stroke="#cfcfcf" stroke-width="1.3" fill="none"/></svg>
<div class="a bl2" style="left:386.4px;width:47px;text-align:center">Участники</div>
<svg class="a" style="left:485px;top:782px" width="18" height="16" viewBox="0 0 18 16"><path d="M2 1 H16 A1.5 1.5 0 0 1 17.5 2.5 V10 A1.5 1.5 0 0 1 16 11.5 H7 L3 15 V11.5 H2 A1.5 1.5 0 0 1 0.5 10 V2.5 A1.5 1.5 0 0 1 2 1 Z" fill="#d8d8d8"/></svg>
<div class="a bl2" style="left:483px;width:21px;text-align:center">Чат</div>
<div class="a" style="left:571px;top:782.6px;width:19.7px;height:14.5px;background:#23d959;border-radius:2px"></div>
<svg class="a" style="left:575.5px;top:785px" width="11" height="10" viewBox="0 0 11 10"><path d="M5.5 9 V2 M2.5 4.8 L5.5 1.8 L8.5 4.8" stroke="#0b2a12" stroke-width="1.6" fill="none"/></svg>
<div class="a bl2" style="left:532px;width:98px;text-align:center;color:#23d959">Демонстрация экрана</div>
<svg class="a" style="left:660px;top:781.5px" width="17" height="17" viewBox="0 0 17 17"><circle cx="8.5" cy="8.5" r="7.3" stroke="#d8d8d8" stroke-width="1.5" fill="none"/><circle cx="8.5" cy="8.5" r="5.2" fill="#9a9a9a"/></svg>
<div class="a bl2" style="left:652px;width:32.5px;text-align:center">Запись</div>
<svg class="a" style="left:724px;top:780px" width="21" height="18" viewBox="0 0 21 18"><circle cx="9" cy="10" r="7.5" fill="#d8d8d8"/><circle cx="6.5" cy="8.5" r="1" fill="#1a1a1a"/><circle cx="11.5" cy="8.5" r="1" fill="#1a1a1a"/><path d="M5.8 11.3 C7 13.5 11 13.5 12.2 11.3" stroke="#1a1a1a" stroke-width="1.2" fill="none"/><path d="M17 0.5 V6.5 M14 3.5 H20" stroke="#d8d8d8" stroke-width="1.4"/></svg>
<div class="a bl2" style="left:714.5px;width:36.5px;text-align:center">Реакции</div>
<div class="a" style="left:964.6px;top:786.8px;width:50px;height:21.7px;background:#d42f2f;border-radius:4px"></div>
<div class="a" style="left:964.6px;top:791.5px;width:50px;text-align:center;font-size:9.3px;font-weight:bold;color:#fff;line-height:12px">Выйти</div>

</body></html>
